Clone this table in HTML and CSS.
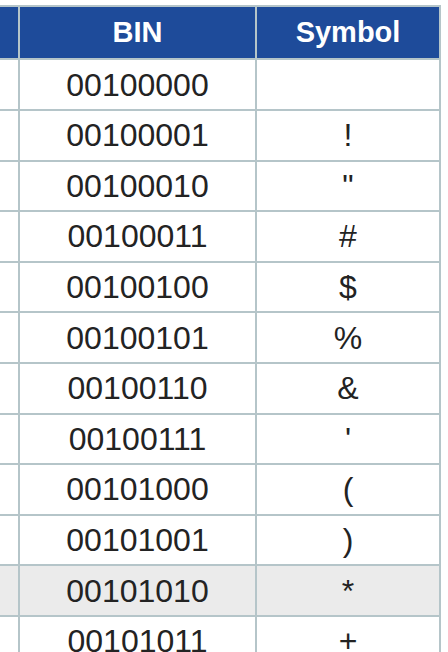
FILE: index.html
```html
<!DOCTYPE html>
<html lang="en">
<head>
<meta charset="utf-8">
<title>ASCII table</title>
<link rel="stylesheet" href="styles.css">
</head>
<body>
<div class="table">
  <div class="cell head"></div><div class="cell head">BIN</div><div class="cell head">Symbol</div>
  <div class="cell"></div><div class="cell">00100000</div><div class="cell"></div>
  <div class="cell"></div><div class="cell">00100001</div><div class="cell">!</div>
  <div class="cell"></div><div class="cell">00100010</div><div class="cell">"</div>
  <div class="cell"></div><div class="cell">00100011</div><div class="cell">#</div>
  <div class="cell"></div><div class="cell">00100100</div><div class="cell">$</div>
  <div class="cell"></div><div class="cell">00100101</div><div class="cell">%</div>
  <div class="cell"></div><div class="cell">00100110</div><div class="cell">&amp;</div>
  <div class="cell"></div><div class="cell">00100111</div><div class="cell">'</div>
  <div class="cell"></div><div class="cell">00101000</div><div class="cell">(</div>
  <div class="cell"></div><div class="cell">00101001</div><div class="cell">)</div>
  <div class="cell hl"></div><div class="cell hl">00101010</div><div class="cell hl">*</div>
  <div class="cell"></div><div class="cell">00101011</div><div class="cell">+</div>
</div>
</body>
</html>
```

FILE: styles.css
```css
html, body {
  margin: 0;
  padding: 0;
  background: #ffffff;
  overflow: hidden;
}
body {
  padding-top: 5px;
  font-family: "Liberation Sans", Arial, sans-serif;
}
.table {
  display: grid;
  grid-template-columns: 18px 235px 182px;
  grid-template-rows: 51.4px repeat(12, 48.6px);
  gap: 2px;
  padding: 2px 2px 2px 0;
  width: max-content;
  background: #b5c5c9;
}
.cell {
  background: #ffffff;
  color: #232323;
  font-size: 32px;
  display: flex;
  align-items: center;
  justify-content: center;
  line-height: 1;
}
.cell.head {
  background: #1e4b9a;
  color: #ffffff;
  font-weight: bold;
  font-size: 29px;
}
.cell.hl {
  background: #ebebeb;
}
```
